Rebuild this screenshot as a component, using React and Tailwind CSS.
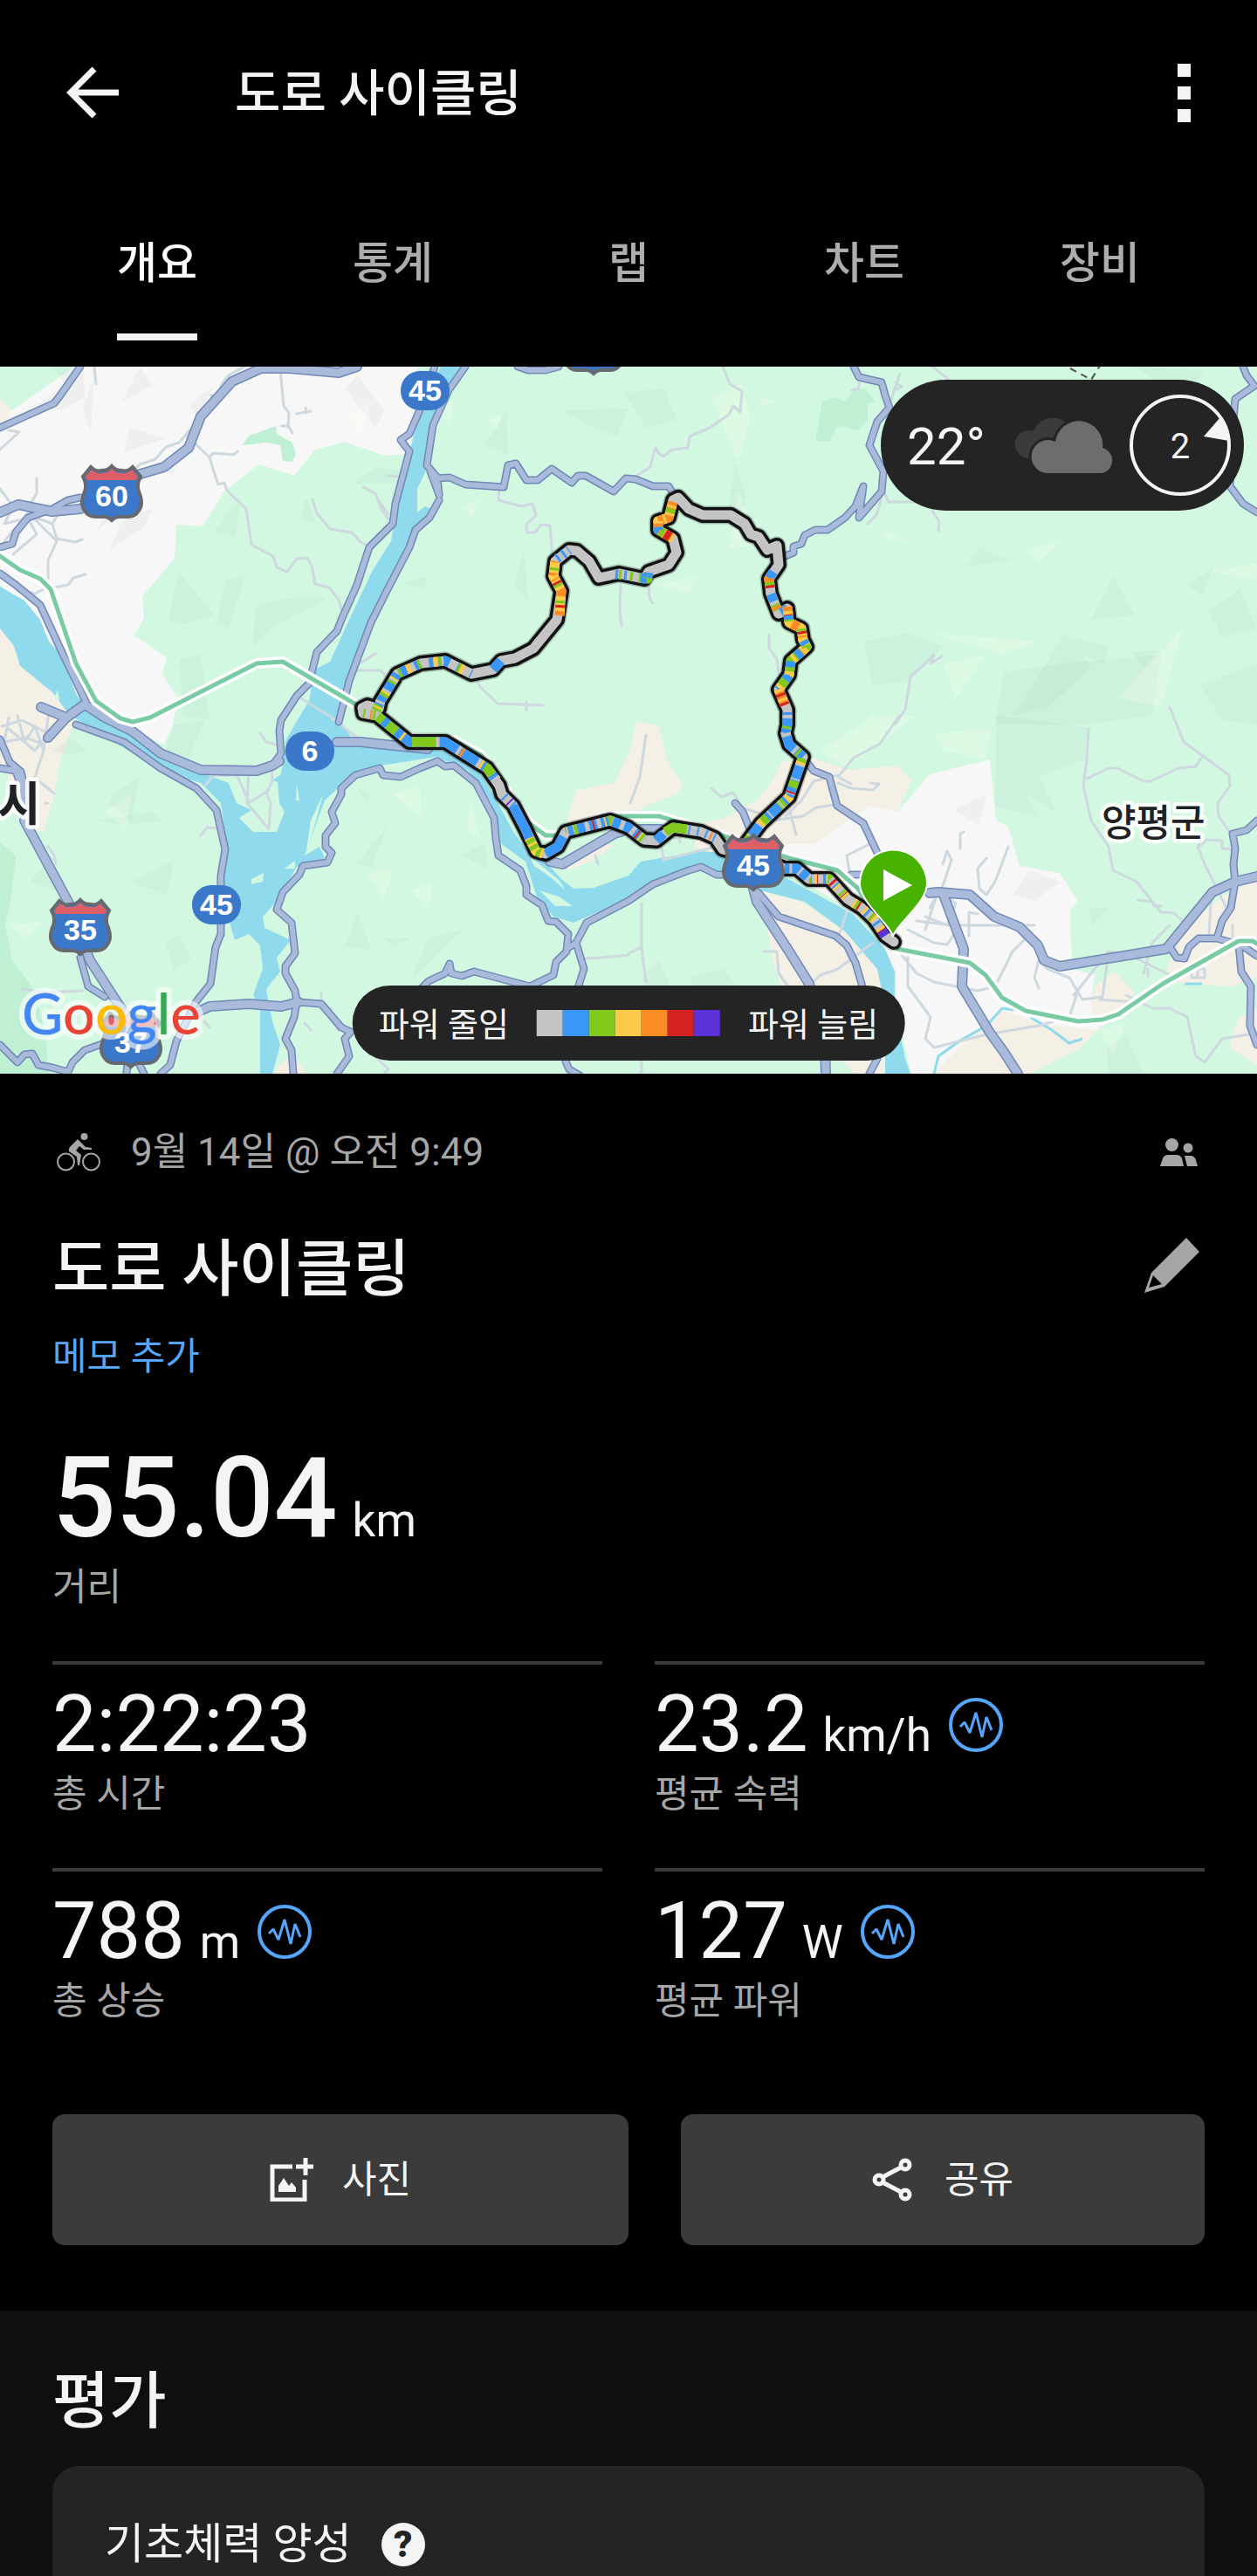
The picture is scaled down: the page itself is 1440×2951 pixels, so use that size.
import { useState } from "react";

const TABS = ["개요", "통계", "랩", "차트", "장비"];

const STATS = [
  { value: "2:22:23", label: "총 시간" },
  { value: "23.2", unit: "km/h", label: "평균 속력", insight: true },
  { value: "788", unit: "m", label: "총 상승", insight: true },
  { value: "127", unit: "W", label: "평균 파워", insight: true },
];

const GRAY = "#c4c4c4";
const BLUE = "#3b97f5";
const GREEN = "#82c91e";
const YELLOW = "#fccb4a";
const ORANGE = "#fb8b23";
const RED = "#d62222";
const PURPLE = "#5b30d6";

const LEGEND = ["bg-[#c4c4c4]", "bg-[#3b97f5]", "bg-[#82c91e]", "bg-[#fccb4a]", "bg-[#fb8b23]", "bg-[#d62222]", "bg-[#5b30d6]"];

// terrain
const WHITE_AREAS = [
  "85,0 478,0 478,20 469,100 441,102 394,86 360,96 337,125 296,112 257,143 232,183 202,181 200,220 163,263 165,288 154,308 191,333 186,352 204,380 197,413 188,433 170,425 92,383 46,293 0,250 0,43 14,50",
  "895,547 932,547 996,503 1028,510 1065,467 1134,450 1141,520 1155,527 1168,572 1214,580 1235,612 1226,622 1228,690 1254,697 1249,730 1258,760 1226,770 1097,810 1044,810 1026,733 1026,693 996,640 950,607 899,580",
];

const BEIGE_AREAS = [
  "0,36 12,50 8,62 0,64",
  "0,283 18,320 22,340 60,370 83,400 83,413 69,450 60,500 50,533 28,530 9,467 0,457",
  "729,407 754,410 764,450 782,480 775,490 740,503 720,517 675,530 646,540 646,533 660,485 704,477 722,440",
  "638,572 675,547 704,548 680,565 650,577",
  "794,553 803,523 830,517 867,497 886,473 895,453 927,447 973,462 1028,457 1044,473 1028,510 996,503 932,547 895,547 871,600 800,552",
  "871,600 918,613 968,647 1005,690 1014,733 1014,810 978,810 895,710 886,683",
  "1254,710 1277,693 1300,717 1258,760 1235,782 1180,810 1070,810 1102,777 1148,737 1194,753 1258,760 1249,730",
  "1440,587 1401,607 1359,640 1336,690 1355,707 1410,710 1440,700",
  "1419,745 1440,735 1440,800 1408,780",
  "313,810 320,800 330,792 342,796 351,810",
];

const DEEP_GREEN = [
  "285,79 316,68 317,77 335,87 339,100 335,109 324,108 321,90 305,87 278,90",
  "942,40 956,35 968,40 978,28 990,25 1003,40 994,43 994,62 982,73 966,68 958,70 950,86 934,85",
  "0,545 18,560 14,600 6,640 14,680 40,715 52,765 56,810 0,810",
];

const WATER =
  "0,252 28,268 46,290 56,315 70,330 88,377 98,385 140,410 165,432 205,456 262,477 271,500 288,508 274,517 290,533 317,533 326,510 320,500 318,476 312,474 322,467 328,427 340,406 354,383 360,347 378,338 400,290 427,233 448,200 455,160 464,127 473,83 482,47 505,0 533,0 510,40 494,67 489,117 478,140 478,167 487,160 494,163 473,193 450,247 422,293 404,353 400,383 391,407 404,427 482,437 514,440 551,467 569,497 588,533 606,557 625,567 643,587 657,598 680,597 720,583 734,567 803,555 830,557 899,585 940,607 977,627 1014,667 1025,693 1025,733 1037,793 1043,810 1014,810 1014,733 1005,690 968,647 922,613 871,600 803,572 748,590 720,610 680,627 657,637 634,630 615,607 602,567 569,543 563,500 537,463 500,447 436,457 404,467 372,497 349,560 366,550 372,563 340,573 317,613 301,630 303,643 333,657 317,677 321,693 305,713 312,750 321,777 312,810 298,810 298,733 290,720 301,690 298,663 285,650 269,657 262,633 255,590 260,550 253,500 230,477 184,463 142,437 97,410 78,397 60,373 23,343 16,320 0,300";

const ISLANDS = [
  "340,478 343,497 339,497",
  "288,587 302,580 301,590 288,593",
  "338,566 326,575 338,575",
  "370,490 362,520 350,560 356,520",
  "606,560 640,588 648,600 632,586 612,572",
  "618,600 640,607 656,618 636,618",
  "62,380 66,370 68,382",
];

const HILLS_DARK = [
  "40,45 75,20 60,0 95,0 98,35 70,50", "95,48 108,10 104,75", "148,70 190,82 142,98", "160,0 175,22 140,40",
  "125,210 140,175 175,162 165,185", "110,190 125,160 130,170", "185,115 205,95 198,125", "218,42 245,22 225,60",
  "245,190 275,150 270,195", "350,150 362,180 345,175", "395,25 410,10 440,50 430,70", "290,320 292,275 330,265 375,265 310,300",
  "193,290 205,235 245,285 212,295", "248,295 258,245 280,240 262,300", "645,50 720,48 706,80 670,65", "555,90 580,50 582,100",
  "460,248 490,240 485,255", "405,135 430,115 460,120 470,132", "590,250 600,210 605,270", "715,30 760,25 775,60 740,70",
  "835,160 842,110 855,150 848,170", "1108,228 1120,208 1158,222", "1250,290 1275,240 1300,285", "1240,330 1225,310 1270,320 1265,340",
  "990,315 1040,305 1080,320 1040,360 1000,365", "1298,327 1326,325 1310,345", "1385,280 1420,255 1440,300 1400,310",
  "1180,370 1220,305 1250,345 1200,390 1160,400", "1140,410 1150,350 1220,340 1330,330 1320,400 1240,410", "1375,365 1440,340 1440,410 1400,405",
  "1142,400 1245,413 1243,450 1190,470 1210,510 1175,490 1190,515 1140,505", "1248,620 1270,620 1250,640",
  "1268,780 1290,765 1310,810 1270,810", "1360,250 1390,230 1378,262", "130,490 160,470 150,520 125,500",
  "110,520 175,510 185,520 140,525", "150,590 200,565 190,605", "190,660 205,650 220,680 200,690", "408,570 445,525 425,573",
  "395,665 410,625 425,668", "440,655 470,655 452,665", "472,700 490,655 530,645 485,690", "530,560 555,545 560,575",
  "410,483 425,490 420,500", "35,590 60,560 62,600", "200,410 235,405 215,450 190,440", "205,335 230,330 240,405 210,400",
  "735,700 755,680 770,715 750,725", "790,700 830,690 850,720 800,720", "60,440 80,425 100,440 75,445", "1070,65 1090,50 1085,90",
  "1300,0 1380,5 1360,35 1330,20", "1092,508 1130,490 1122,525", "1160,605 1180,577 1215,590 1185,612",
];

const HILLS_LIGHT = [
  "815,35 850,20 860,60 845,110", "868,35 893,40 875,45", "845,140 860,180 880,200 835,210", "400,55 425,40 415,80",
  "1065,305 1130,310 1190,315 1150,330", "1175,210 1215,200 1190,225", "1280,380 1355,300 1330,390", "940,440 1000,400 1050,400 970,460",
  "1080,340 1130,330 1095,380", "1385,235 1440,225 1440,245", "530,160 552,150 540,175", "360,470 380,490 370,500",
  "450,490 480,480 485,520", "540,500 550,540 535,530", "120,510 150,490 145,530", "420,580 450,575 440,610", "1010,185 1040,200 1015,200",
  "1070,420 1135,415 1130,450 1080,440", "470,600 495,590 492,620", "10,640 50,635 30,655", "1260,760 1290,750 1275,790",
  "560,60 575,55 570,75", "500,45 520,40 515,70", "750,250 800,240 790,260",
];

const STREETS = [
  "M321,3 L325,45 331,53 330,68 335,76", "M323,68 H331", "M340,54 L350,52 356,51 M350,47 L351,53",
  "M280,0 L262,10 254,20 250,34 241,33", "M218,72 L205,87 190,92 178,106 160,112 150,122",
  "M215,80 L240,104 245,120 250,135 257,133 260,142 282,163 288,204 313,217 317,230 329,235 340,220 352,219 357,228 361,249 377,253 388,267 393,285",
  "M240,103 L245,99 268,101 272,97", "M358,152 L363,168 378,186 403,190 413,201 424,206", "M416,138 L430,145 437,163 445,175 M435,155 L445,169",
  "M445,125 L455,126", "M572,140 L571,153 597,160 610,157 614,170 603,181 604,190 613,190 620,181 630,182 633,220 650,260",
  "M108,0 L110,20 M42,128 V145 L30,165 45,180 65,200 55,222 55,245", "M0,140 L15,160 5,180 38,172 60,180 72,160 M5,200 L30,170 42,192 15,215",
  "M60,180 L65,197 86,201 94,198", "M0,95 L22,75 10,73", "M62,253 L78,250 84,242 98,238", "M0,235 L20,255 40,260 50,255",
  "M405,348 L436,348 446,358 M412,340 L430,329", "M545,357 L550,367 570,386 622,388 M603,384 V393", "M711,250 L710,280 712,297 M743,250 L744,265 748,271",
  "M828,0 L836,20 850,28 848,52 840,45 835,55 813,70 790,80 788,93 770,95 760,103 750,95 745,115 729,125", "M751,93 L755,100",
  "M1031,8 L1020,40 M1026,18 L1033,23 1028,26 M984,15 V25 L976,27", "M1068,0 L1086,14", "M1011,140 L1018,155 1050,155 M1010,150 L1004,170 994,180",
  "M1068,165 L1076,178 1075,188", "M881,307 V322 L890,335 892,352", "M1025,410 L1037,393 1043,355 1058,342 1070,330 1066,340 1079,332",
  "M1030,400 L1008,432 978,448 960,470 975,478", "M815,483 L826,493 840,488 850,505 880,515", "M960,477 L975,483 1000,485 1007,478 997,477",
  "M885,520 L920,515 935,505 955,502 M905,510 L912,536", "M960,468 L932,475 918,497 900,515", "M740,422 L733,470 722,500",
  "M1247,415 L1245,450 1241,480 1250,520 1270,550 1275,577 1302,590 1330,625 1345,626 1360,640",
  "M1245,472 L1270,460 1280,460 1310,475 1318,475 1350,460 1370,458 1378,445",
  "M1340,390 L1356,430 1408,468 1409,480 1395,500 1396,515 1410,535 M1378,540 L1372,550 1380,570 1395,600 1405,620",
  "M1372,552 L1382,542 1400,543 1400,552 1412,553", "M1304,611 L1320,613 1322,618 1330,618", "M1230,720 L1270,670 1300,677 1340,697 M1315,690 V698",
  "M1290,720 L1320,735 1340,735 1360,745 1370,790 1380,797 1400,770 1430,765", "M1260,725 L1300,728 M1270,670 L1263,722 1240,725 1225,700 1200,690 1190,680",
  "M975,590 L970,560 1000,545 M1080,570 L1085,555 1090,565 1080,595 1065,620", "M1100,552 V535 L1104,533 M1155,550 L1140,590 1130,605 1122,598 1120,575 1130,563",
  "M1050,635 L1090,640 1185,640 M1060,645 L1075,600 1095,615 1085,640 1060,630 M1110,652 V625 L1120,627",
  "M1040,645 L1070,660 1085,662 1100,640 M1040,667 V710 L1066,745 1060,770 1070,780 1130,765 1190,755 1225,745 1235,715",
  "M1030,670 L1050,695 1070,705 1120,715 1140,710 1160,670 1180,650 M1190,680 L1185,700 1190,712",
  "M758,550 L760,565 820,550 M779,545 V540 H772", "M970,625 L960,655 M1000,660 L960,690 940,697 920,715 M875,670 H890 L892,695 910,720",
  "M735,615 V665 L740,705 M735,665 L720,672 M735,760 V810", "M285,460 L283,500 308,530 310,500 305,488 312,475 311,460 M285,500 L308,485 M270,465 L285,498",
  "M298,420 L305,430 316,433 M380,403 L412,427 M345,380 L385,405 M235,480 L245,468 H270", "M230,537 L237,528 247,529",
  "M2,412 L25,405 55,420 40,440 10,415 M20,400 L28,430 40,412 50,440 M10,402 L5,430 30,425 48,432", "M56,395 L50,440 40,470 28,480 M45,475 L62,489 M52,500 H55",
  "M25,713 L50,717 95,715 M670,678 L690,677 720,674 M682,560 L685,570 M650,570 L648,575", "M55,550 L62,560 64,570", "M349,752 L356,760 M368,718 V726",
  "M380,735 L375,740 387,760 M240,757 L225,740 M430,790 L445,805 440,810", "M1310,695 L1320,660 1340,640 M1388,600 L1385,650 M1412,640 V655 M1365,690 H1380 V700 H1365 Z M1372,690 V700",
];

const ROADS = [
  "M498,0 L482,47 469,77 459,84 469,97 453,157 450,180 423,207 409,250 391,290 386,303 363,327 354,363 340,377 322,405 320,417 322,443 312,457",
  "M533,0 L514,27 496,67 489,113 501,127 503,147", "M503,153 L492,173 476,187 469,207 443,257 425,293 400,360 388,407",
  "M493,120 L503,147", "M500,128 L515,127 533,135 577,138 582,113 591,111 603,130 616,130 632,117 655,133 662,125 671,125 703,143 717,128 728,129 748,137 766,137 774,150",
  "M978,0 L984,12 1010,18 1014,33 1019,47 1005,63 996,90 1012,120 1010,143 984,173 989,137 980,160 968,173 948,187 934,187 922,193 918,203 909,206 909,213 895,219",
  "M1424,0 L1428,10 1437,22 1415,37 1413,60 1409,137 1424,157 1440,167", "M593,0 L605,4 625,4 640,0",
  "M0,70 L62,42 69,33 92,0", "M92,150 L78,153 60,163 32,173 18,190 14,203 0,207", "M0,237 L18,250 46,273 69,323 98,383",
  "M87,410 L142,430 184,460 225,483 248,508 258,553 253,583 253,650 247,665 241,707 225,727 202,773 195,800 184,810",
  "M342,728 L368,730 391,757 402,762 395,770 400,790 386,810",
  "M0,460 L18,463 24,480 30,527 M0,427 L11,453 24,464 30,490", "M92,677 L101,710 120,722 M150,745 L145,810 M150,780 L165,810",
  "M117,776 L97,783 83,797 78,808 60,803 44,800 37,787 28,788 20,797 0,777",
  "M501,452 L481,460 459,470 439,468 435,460 407,468 391,483 391,490 380,510 384,523 373,537 373,550 380,557 375,568 347,572 343,582 324,602 317,622 334,637 338,672 327,687 327,695 338,715 340,727 337,745 327,770 334,783 336,810",
  "M501,452 L510,458 520,457 545,477 566,517 568,540 571,560 596,577 603,595 603,605 621,617 628,635 637,636 651,650 649,670 637,682 634,697 607,710 543,693 529,698 517,695 515,684 510,695 491,704 483,712",
  "M662,712 L669,690 660,660 672,637 720,612 748,593 789,577 803,573 821,582 863,582", "M649,667 L660,660",
  "M1012,582 H975 M648,796 L652,805 664,812",
  "M842,500 L851,510 863,540", "M922,450 L932,463 950,470 959,503 989,523 1005,557 1014,590",
  "M869,603 L892,630 957,652 970,663 980,683 987,707 1005,793 996,810",
  "M1440,520 L1428,531 1412,535 1415,552 1413,570 1415,590 1410,620 1400,635 1394,655 1373,655 1362,665 1357,678 1348,677 1339,663",
  "M1394,655 L1419,662 1422,693 1433,710 1432,755 1440,777 M1424,664 L1440,675",
];

const HIGHWAYS = [
  "M409,0 L388,7 331,2 299,2 266,17 248,37 230,57 216,93 188,115 161,123 92,163 60,166 21,158 0,167",
  "M320,452 L312,457 294,463 230,462 184,443 152,418 120,402 97,387 76,402 55,425 M47,390 L76,402",
  "M28,520 L78,613 103,680 145,745 158,778", "M225,740 L240,733 285,730 322,733 342,728",
  "M386,430 L413,430 460,435 490,438", "M630,567 L644,570 704,535 720,530 757,530",
  "M1065,603 L1075,602 1111,605 1139,630 1168,642 1189,663 1196,680 1214,687 1336,667 1389,602 1415,590 1440,584",
  "M1080,603 L1104,667 1102,710 1134,763 1150,785 1166,810", "M863,598 L867,613 904,670 927,707 945,780 946,810",
];

const RAIL =
  "M0,217 L23,233 46,243 58,255 87,340 110,383 138,403 152,407 172,402 294,340 324,338 413,390 470,425 520,428 551,445 606,523 625,537 648,537 690,515 755,515 830,538 904,563 959,577 982,597 1028,667 1111,683 1129,697 1148,723 1175,738 1235,750 1263,748 1281,742 1332,707 1419,658 1435,658 1440,661";

const TRACK =
  "M1024,659 L1014,652 1001,633 987,620 971,610 950,587 927,587 913,575 899,575 863,560 828,553 819,540 803,533 771,528 752,543 738,542 720,528 699,520 648,533 639,550 625,558 614,555 602,530 588,503 575,490 572,480 558,460 510,430 469,430 432,400 416,397 415,391 421,388 434,392 436,383 455,352 482,340 510,337 540,352 565,347 574,337 590,334 611,323 638,290 643,257 634,240 636,223 652,210 661,211 675,223 686,242 709,237 738,243 743,235 766,227 775,213 771,197 754,187 754,177 766,173 771,153 777,150 789,163 805,170 837,170 853,180 860,192 869,195 879,210 890,205 892,227 881,243 883,260 892,283 902,277 904,293 918,300 920,313 924,321 906,337 904,353 892,370 902,393 902,410 900,420 904,433 920,447 904,493 872,523 853,548";

// power zones painted over the gray track; bands are [color, dash, offset]
const HILLY = [
  [ORANGE, "9 12", 0],
  [YELLOW, "4 9", 5],
  [RED, "3 25", 9],
  [GREEN, "3 17", 14],
];
const MIXED = [
  [YELLOW, "6 19", 4],
  [GREEN, "7 21", 12],
  [BLUE, "9 18", 0],
  [ORANGE, "4 29", 9],
  [RED, "3 47", 17],
];
const STEADY = [
  [GREEN, "13 60", 8],
  [GRAY, "4 23", 0],
  [YELLOW, "3 97", 24],
  [ORANGE, "3 160", 50],
];
const ZONES = [
  { d: "M1014,652 L1001,633 987,620 971,610 950,587 927,587", bands: [[BLUE, "3 13", 0], [RED, "3 17", 5], [YELLOW, "3 11", 8], [GREEN, "3 19", 3], [PURPLE, "7 200", 0]] },
  { d: "M927,587 L913,575 899,575", base: BLUE, bands: [[GRAY, "3 9", 0]] },
  { d: "M819,540 L803,533 787,530", bands: [[BLUE, "2 8", 0], [ORANGE, "2 60", 4]] },
  { d: "M787,530 L771,528 762,533", base: GREEN, bands: [] },
  { d: "M760,535 L752,543", base: BLUE, bands: [] },
  { d: "M738,542 L720,528 699,520 648,533", base: BLUE, bands: [[GRAY, "5 9", 0], [GREEN, "4 37", 2], [RED, "2 53", 9], [YELLOW, "2 43", 5]] },
  { d: "M648,533 L639,550 625,558", base: BLUE, bands: [[GRAY, "6 40", 0]] },
  { d: "M622,558 L614,555 606,540", base: GREEN, bands: [[YELLOW, "3 5", 0]] },
  { d: "M606,540 L602,530 588,503", base: BLUE, bands: [] },
  { d: "M588,503 L575,490", bands: [[PURPLE, "2 40", 5], [BLUE, "2 11", 0]] },
  { d: "M569,474 L558,460 510,430 469,430 432,400", base: BLUE, bands: STEADY },
  { d: "M495,430 H472", base: GREEN, bands: [] },
  { d: "M454,418 L444,410", base: GREEN, bands: [] },
  { d: "M432,400 L416,397", bands: [[GREEN, "3 9", 2], [ORANGE, "2 11", 6]] },
  { d: "M431,394 L436,383 455,352", base: BLUE, bands: [[GREEN, "7 11", 0], [GRAY, "3 12", 9], [YELLOW, "2 17", 3]] },
  { d: "M455,352 L482,340 510,337 540,352", bands: [[BLUE, "7 10", 5], [YELLOW, "5 27", 12], [PURPLE, "3 90", 50], [GREEN, "3 21", 2]] },
  { d: "M565,347 L574,337", base: BLUE, bands: [] },
  { d: "M641,285 L643,257 634,240 636,223", base: YELLOW, bands: HILLY },
  { d: "M638,220 L652,210", bands: [[BLUE, "3 5", 0]] },
  { d: "M705,238 L725,240", bands: [[BLUE, "3 7", 0], [GREEN, "3 10", 4]] },
  { d: "M732,242 L742,243 743,236", base: BLUE, bands: [[GREEN, "2 7", 0]] },
  { d: "M771,197 L754,187 754,177 766,173 771,155", base: ORANGE, bands: [[YELLOW, "3 6", 0], [GREEN, "5 31", 12], [BLUE, "5 60", 18], [RED, "7 90", 4]] },
  { d: "M886,235 L881,243 883,260 892,283 902,277", base: GRAY, bands: MIXED },
  { d: "M902,275 L904,293 918,300 920,313 924,321 918,327", base: YELLOW, bands: [...HILLY, [BLUE, "5 33", 10]] },
  { d: "M918,327 L906,337 904,353 892,370", base: GREEN, bands: [[BLUE, "7 9", 0], [YELLOW, "4 15", 9]] },
  { d: "M892,370 L899,388", base: ORANGE, bands: [[YELLOW, "3 8", 0], [RED, "3 8", 5]] },
  { d: "M902,396 L902,410 900,420 904,433 920,447", base: BLUE, bands: [[GRAY, "4 17", 3], [GREEN, "3 31", 16]] },
  { d: "M919,449 L904,493 872,523 853,548", base: BLUE, bands: [[GREEN, "8 19", 0], [YELLOW, "5 37", 4], [GRAY, "2 15", 7], [RED, "2 90", 40]] },
];

function Interstate({ x, y, number }) {
  return (
    <g transform={`translate(${x} ${y})`}>
      <path
        d="M-24,-30 L-33,-19 Q-28,-10 -31,-2 Q-37,12 -31,20 Q-27,27 -18,27 H-9 Q-4,27 0,31 Q4,27 9,27 H18 Q27,27 31,20 Q37,12 31,-2 Q28,-10 33,-19 L24,-30 Q18,-24 12,-26 Q4,-26 0,-31 Q-4,-26 -12,-26 Q-18,-24 -24,-30 Z"
        fill="#3b78c9"
        stroke="#666a70"
        strokeWidth="4"
      />
      <path d="M-23,-27 L-30,-19 -28,-15 H28 L30,-19 23,-27 Q18,-22 12,-23 Q4,-23 0,-28 Q-4,-23 -12,-23 Q-18,-22 -23,-27 Z" fill="#dc6065" />
      <text y="15" textAnchor="middle" fill="#fff" className="font-['Liberation_Sans',sans-serif] text-[34px] font-bold">
        {number}
      </text>
    </g>
  );
}

function RouteBadge({ x, y, number }) {
  return (
    <g transform={`translate(${x} ${y})`}>
      <rect x="-28" y="-22" width="56" height="45" rx="22" fill="#3b78c9" />
      <text y="12" textAnchor="middle" fill="#fff" className="font-['Liberation_Sans',sans-serif] text-[34px] font-bold">
        {number}
      </text>
    </g>
  );
}

function RideMap() {
  return (
    <svg viewBox="0 0 1440 810" className="block w-full" role="img" aria-label="경로 지도">
      <rect width="1440" height="810" fill="#d2f8e2" />
      {WHITE_AREAS.map((p) => <polygon key={p} points={p} fill="#f7f7f7" />)}
      {BEIGE_AREAS.map((p) => <polygon key={p} points={p} fill="#f5f0e5" />)}
      {DEEP_GREEN.map((p) => <polygon key={p} points={p} fill="#bff0d4" />)}
      {HILLS_DARK.map((p) => <polygon key={p} points={p} fill="#7a9a8a" opacity="0.07" />)}
      {HILLS_LIGHT.map((p) => <polygon key={p} points={p} fill="#fffff0" opacity="0.25" />)}
      <polygon points={WATER} fill="#90daee" />
      {ISLANDS.map((p) => <polygon key={p} points={p} fill="#d2f8e2" />)}
      <path d="M1070,810 L1075,790 1100,772 1130,755 1148,735 1162,737 M1180,745 L1205,760 1225,775 1240,770" fill="none" stroke="#90daee" strokeWidth="3" />
      <path d="M1357,707 H1377" stroke="#90daee" strokeWidth="3" />
      <path d="M1226,2 L1250,15 1262,-4" fill="none" stroke="#555" strokeWidth="2" strokeDasharray="8 6" />

      <g fill="none" strokeLinecap="round" strokeLinejoin="round">
        <path d={STREETS.join(" ")} stroke="#ced8df" strokeWidth="3" />
        <path d={ROADS.join(" ")} stroke="#6f88b6" strokeWidth="9" />
        <path d={HIGHWAYS.join(" ")} stroke="#6f88b6" strokeWidth="12" />
        <path d={ROADS.join(" ")} stroke="#a9badb" strokeWidth="6" />
        <path d={HIGHWAYS.join(" ")} stroke="#a9badb" strokeWidth="9" />
        <path d={RAIL} stroke="#fff" strokeWidth="12" />
        <path d={RAIL} stroke="#78cba2" strokeWidth="5" />
        <path d={TRACK} stroke="#000" strokeOpacity="0.25" strokeWidth="21" />
        <path d={TRACK} stroke="#111" strokeWidth="18" />
        <path d={TRACK} stroke={GRAY} strokeWidth="11" />
      </g>
      <g fill="none" strokeWidth="11" strokeLinejoin="round">
        {ZONES.map((zone) => (
          <g key={zone.d}>
            {zone.base && <path d={zone.d} stroke={zone.base} />}
            {zone.bands.map(([color, dash, offset]) => (
              <path key={color} d={zone.d} stroke={color} strokeDasharray={dash} strokeDashoffset={-offset} />
            ))}
          </g>
        ))}
      </g>

      <Interstate x={128} y={145} number="60" />
      <Interstate x={92} y={642} number="35" />
      <Interstate x={150} y={771} number="37" />
      <Interstate x={863} y={568} number="45" />
      <Interstate x={680} y={-23} number="6" />
      <RouteBadge x={487} y={27} number="45" />
      <RouteBadge x={355} y={440} number="6" />
      <RouteBadge x={248} y={616} number="45" />

      <path
        d="M1023,650 C1014,632 986,612 986,592 A37,37 0 0 1 1061,592 C1061,612 1033,632 1023,650 Z"
        fill="#47b300"
        stroke="#fff"
        strokeWidth="4"
        className="[paint-order:stroke]"
      />
      <path d="M1012,576 L1045,594 1012,612 Z" fill="#fff" />

      <g stroke="#fff" strokeOpacity="0.9" strokeWidth="9" strokeLinejoin="round" fill="#1f2124" className="[paint-order:stroke]">
        <text x="1262" y="538" className="font-['Noto_Sans_CJK_KR',sans-serif] text-[43px] font-medium">양평군</text>
        <text x="-3" y="521" className="font-['Noto_Sans_CJK_KR',sans-serif] text-[54px] font-bold">시</text>
      </g>
      <text
        x="25"
        y="765"
        stroke="#fff"
        strokeOpacity="0.6"
        strokeWidth="12"
        strokeLinejoin="round"
        className="font-[Lato,sans-serif] text-[65px] font-medium [paint-order:stroke]"
      >
        <tspan fill="#4285f4">G</tspan>
        <tspan fill="#ea4335">o</tspan>
        <tspan fill="#fbbc05">o</tspan>
        <tspan fill="#4285f4">g</tspan>
        <tspan fill="#34a853">l</tspan>
        <tspan fill="#ea4335">e</tspan>
      </text>
    </svg>
  );
}

function Weather() {
  return (
    <div className="absolute top-[15px] right-[15px] flex h-[150px] w-[416px] items-center justify-between rounded-full bg-[#242424] pr-[15px] pl-[30px]">
      <span className="pt-1 text-[60px] leading-none">22°</span>
      <svg viewBox="0 0 118 66" className="ml-4 h-[66px] w-[118px]" aria-hidden="true">
        <path d="M17,48 A16,16 0 1 1 24,17 A24,24 0 0 1 66,12 L40,44 Z" fill="#3b3b3b" />
        <path
          d="M42,65 A19,19 0 1 1 49,29 A27,27 0 0 1 103,36 A15,15 0 0 1 103,65 Z"
          fill="#6d6d6d"
          stroke="#242424"
          strokeWidth="6"
          className="[paint-order:stroke]"
        />
      </svg>
      <div className="relative flex size-[116px] items-center justify-center">
        <svg viewBox="0 0 116 116" className="absolute inset-0" aria-hidden="true">
          <circle cx="58" cy="58" r="56" fill="none" stroke="#f4f4f4" strokeWidth="4" />
          <path d="M104,26 L85,48 114,53 Q113,38 104,26 Z" fill="#f4f4f4" />
        </svg>
        <span className="pt-1 text-[40px] leading-none">2</span>
      </div>
    </div>
  );
}

function Legend() {
  return (
    <div className="absolute bottom-[15px] left-1/2 flex h-[86px] -translate-x-1/2 items-center gap-[32px] rounded-full bg-[#242424] px-[30px] text-[38px] leading-[44px] whitespace-nowrap">
      <span className="pt-[3px]">파워 줄임</span>
      <div className="flex h-[30px]">
        {LEGEND.map((color) => <span key={color} className={`w-[30px] ${color}`} />)}
      </div>
      <span className="pt-[3px]">파워 늘림</span>
    </div>
  );
}

function PulseIcon() {
  return (
    <svg viewBox="0 0 62 62" className="size-[62px]" fill="none" stroke="#55a6fa" aria-hidden="true">
      <circle cx="31" cy="31" r="29" strokeWidth="4" />
      <path d="M13,33 L18,28 24,40 31,17 38,45 43,22 49,37" strokeWidth="3" strokeLinejoin="bevel" />
    </svg>
  );
}

function BikeIcon() {
  return (
    <svg viewBox="0 0 50 44" className="h-[44px] w-[50px]" fill="#a6a6a6" aria-hidden="true">
      <g fill="none" stroke="#a6a6a6" strokeWidth="2">
        <circle cx="10.500" cy="33" r="9.500" />
        <circle cx="39.500" cy="33" r="9.500" />
      </g>
      <circle cx="31.500" cy="4" r="4" />
      <path d="M24,7 L30,13 33,16 40,17 V19 H31 L26,15 22,20 28,25 26,37 H24 L23,27 14,21 Q13,18 15,16 Z" />
    </svg>
  );
}

function PeopleIcon() {
  return (
    <svg viewBox="0 0 43 32" className="h-[32px] w-[43px]" fill="#a6a6a6" aria-hidden="true">
      <circle cx="13.500" cy="7.500" r="7.500" />
      <circle cx="32" cy="11" r="5.500" />
      <path d="M0,32 L3,23 Q5,19 9,19 H19 Q23,19 25,23 L27,32 Z" />
      <path d="M28,20 H36 Q40,21 41,25 L43,32 H31 Z" />
    </svg>
  );
}

function PencilIcon() {
  return (
    <svg viewBox="0 0 63 63" className="size-[63px]" fill="#a6a6a6" aria-hidden="true">
      <path fillRule="evenodd" d="M48,0 L63,16 23,56 0,63 8,40 Z M10,43 L5,57 20,53 Z" />
    </svg>
  );
}

function PhotoIcon() {
  return (
    <svg viewBox="0 0 50 50" className="size-[50px]" fill="none" stroke="#f4f4f4" strokeWidth="5" aria-hidden="true">
      <path d="M26,10 H3 V48 H40 V25 M30,10 H50 M41,0 V20" />
      <path d="M10,39 V32 L16,23 22,32 25,28 30,34 V39 Z" fill="#f4f4f4" stroke="none" />
    </svg>
  );
}

function ShareIcon() {
  return (
    <svg viewBox="0 0 46 50" className="h-[50px] w-[46px]" fill="none" stroke="#f4f4f4" strokeWidth="5" aria-hidden="true">
      <circle cx="8" cy="25" r="5" />
      <circle cx="38" cy="8" r="5" />
      <circle cx="38" cy="42" r="5" />
      <path d="M12,22 L33,11 M12,28 L33,39" />
    </svg>
  );
}

function Stat({ value, unit, label, insight }) {
  return (
    <div className="border-t-4 border-[#3b3b3b] pt-6 pb-[55px]">
      <div className="flex h-[90px] items-baseline">
        <span className="text-[90px] leading-[90px]">{value}</span>
        {unit && <span className="ml-[17px] text-[53px] leading-none">{unit}</span>}
        {insight && (
          <button type="button" aria-label={`${label} 추세`} className="ml-5 self-center">
            <PulseIcon />
          </button>
        )}
      </div>
      <p className="mt-1 text-[43px] leading-[60px] text-[#a6a6a6]">{label}</p>
    </div>
  );
}

export default function App() {
  const [tab, setTab] = useState("개요");

  return (
    <main className="bg-black font-[Roboto,'Noto_Sans_CJK_KR',sans-serif] text-[#f4f4f4]">
      <header className="flex h-[212px] items-center px-[76px]">
        <button type="button" aria-label="뒤로">
          <svg viewBox="0 0 60 60" className="size-[60px]" fill="none" stroke="#f4f4f4" strokeWidth="7" aria-hidden="true">
            <path d="M60,30 H5 M32,3 L5,30 32,57" />
          </svg>
        </button>
        <h1 className="ml-[133px] flex-1 pt-1 text-[57px] leading-[80px] font-medium">도로 사이클링</h1>
        <button type="button" aria-label="더보기" className="flex flex-col gap-[11px]">
          <span className="size-[15px] bg-[#f4f4f4]" />
          <span className="size-[15px] bg-[#f4f4f4]" />
          <span className="size-[15px] bg-[#f4f4f4]" />
        </button>
      </header>

      <nav className="grid grid-cols-5 px-[45px] pt-[50px] pb-[30px]">
        {TABS.map((name) => (
          <button
            key={name}
            type="button"
            onClick={() => setTab(name)}
            className={`flex flex-col items-center text-[50px] leading-[80px] font-medium ${tab === name ? "text-white" : "text-[#adadad]"}`}
          >
            {name}
            <span className={`mt-10 h-2 w-[92px] ${tab === name ? "bg-[#f4f4f4]" : "bg-transparent"}`} />
          </button>
        ))}
      </nav>

      <section className="relative">
        <RideMap />
        <Weather />
        <Legend />
      </section>

      <section className="px-[60px] pt-[60px] pb-[75px]">
        <div className="flex h-[60px] items-center pr-2 pl-[5px] text-[#a6a6a6]">
          <BikeIcon />
          <time className="ml-[35px] flex-1 text-[44px] leading-[60px]">9월 14일 @ 오전 9:49</time>
          <PeopleIcon />
        </div>

        <div className="mt-16 flex items-start justify-between pr-[6px]">
          <h2 className="text-[71px] leading-[80px] font-medium">도로 사이클링</h2>
          <button type="button" aria-label="이름 편집" className="pt-1">
            <PencilIcon />
          </button>
        </div>
        <a href="#memo" className="mt-[30px] block text-[43px] leading-[60px] text-[#55a6fa]">메모 추가</a>

        <p className="mt-[68px] flex items-baseline">
          <span className="text-[128px] leading-[128px] font-medium">55.04</span>
          <span className="ml-[17px] text-[53px] leading-none">km</span>
        </p>
        <p className="mt-2 text-[43px] leading-[60px] text-[#a6a6a6]">거리</p>

        <div className="mt-[55px] grid grid-cols-2 gap-x-[60px]">
          {STATS.map((stat) => <Stat key={stat.label} {...stat} />)}
        </div>

        <div className="mt-[45px] grid grid-cols-[11fr_10fr] gap-[60px] text-[43px]">
          <button type="button" className="flex h-[150px] items-center justify-center gap-[33px] rounded-[14px] bg-[#3b3b3b]">
            <PhotoIcon />
            사진
          </button>
          <button type="button" className="flex h-[150px] items-center justify-center gap-[37px] rounded-[14px] bg-[#3b3b3b]">
            <ShareIcon />
            공유
          </button>
        </div>
      </section>

      <section className="bg-[#0f0f0f] px-[60px] pt-[54px]">
        <h2 className="text-[71px] leading-[100px] font-medium">평가</h2>
        <div className="mt-6 flex items-center gap-[34px] rounded-t-[30px] bg-[#242424] px-[60px] pt-[60px] pb-[7px]">
          <h3 className="text-[49px] leading-[60px]">기초체력 양성</h3>
          <button type="button" aria-label="도움말" className="size-[50px] rounded-full bg-[#f4f4f4] text-[42px] leading-[50px] font-black text-[#242424]">
            ?
          </button>
        </div>
      </section>
    </main>
  );
}
